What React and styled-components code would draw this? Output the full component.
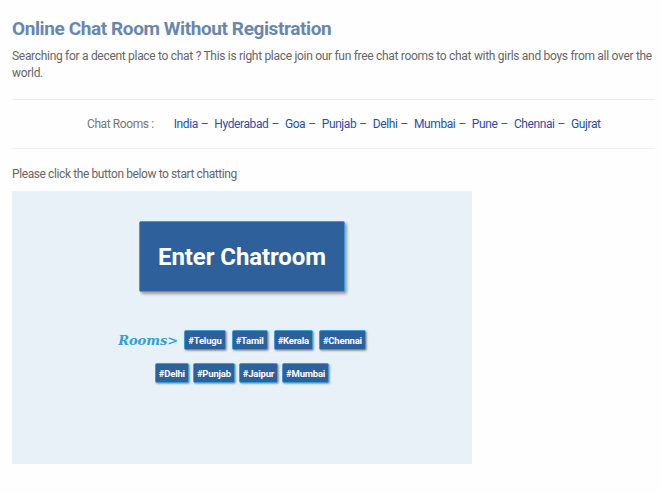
import React from "react";
import styled, { createGlobalStyle } from "styled-components";

const GlobalStyle = createGlobalStyle`
  body {
    margin: 0;
    background: #fefefe;
    font-family: Roboto, "Liberation Sans", sans-serif;
  }
`;

const Page = styled.div`
  padding: 17px 6px 0 12px;
  letter-spacing: -0.4px;
`;

const Title = styled.h1`
  margin: 0;
  font-size: 19px;
  line-height: 24px;
  font-weight: 700;
  color: #6887af;
  letter-spacing: -0.4px;
`;

const Intro = styled.p`
  margin: 7px 0 0;
  font-size: 12px;
  line-height: 17px;
  color: #666;
  letter-spacing: -0.3px;
`;

const RoomBar = styled.div`
  margin-top: 17px;
  border-top: 1px solid #ececec;
  border-bottom: 1px solid #f2f2f2;
  height: 48px;
  display: flex;
  align-items: center;
  padding-left: 75px;
  font-size: 12px;
  color: #777;
`;

const BarLabel = styled.span`
  margin-right: 20px;
`;

const CityLink = styled.a`
  color: #2a4ea6;
  text-decoration: none;
`;

const Dash = styled.span`
  color: #555;
  margin: 0 6px 0 3px;
`;

const Hint = styled.p`
  margin: 17px 0 0;
  font-size: 12px;
  line-height: 17px;
  color: #666;
`;

const ChatBox = styled.div`
  margin-top: 8px;
  width: 460px;
  height: 273px;
  background: #e8f1f8;
  display: flex;
  flex-direction: column;
  align-items: center;
  padding-top: 30px;
  box-sizing: border-box;
  letter-spacing: 0;
`;

const EnterButton = styled.button`
  width: 206px;
  height: 71px;
  background: #2e609c;
  border: 1px solid #3a9fd6;
  border-radius: 2px;
  box-shadow: 2px 2px 3px rgba(0, 0, 0, 0.35);
  color: #fff;
  font-family: Roboto, "Liberation Sans", sans-serif;
  font-weight: 700;
  font-size: 24px;
  letter-spacing: -0.1px;
  cursor: pointer;
`;

const TagArea = styled.div`
  margin-top: 38px;
  display: flex;
  flex-direction: column;
  align-items: center;
  gap: 13px;
`;

const TagRow = styled.div`
  display: flex;
  align-items: center;
  gap: ${(p) => p.gap}px;
`;

const RoomsLabel = styled.span`
  font-family: "DejaVu Serif", "Liberation Serif", serif;
  font-style: italic;
  font-weight: 700;
  font-size: 13px;
  color: #2fa0d8;
  letter-spacing: 0;
`;

const Tag = styled.span`
  display: inline-flex;
  align-items: center;
  justify-content: center;
  height: 20px;
  padding: 0 3px;
  box-sizing: border-box;
  background: #2e609c;
  border: 1px solid #3a9fd6;
  border-radius: 2px;
  box-shadow: 1px 1px 2px rgba(0, 0, 0, 0.35);
  color: #fff;
  font-size: 9.5px;
  font-weight: 700;
  letter-spacing: -0.2px;
`;

const cities = ["India", "Hyderabad", "Goa", "Punjab", "Delhi", "Mumbai", "Pune", "Chennai", "Gujrat"];

export default function App() {
  return (
    <Page>
      <GlobalStyle />
      <Title>Online Chat Room Without Registration</Title>
      <Intro>
        Searching for a decent place to chat ? This is right place join our fun free chat rooms to chat with girls and boys from all over the world.
      </Intro>
      <RoomBar>
        <BarLabel>Chat Rooms :</BarLabel>
        {cities.map((c, i) => (
          <React.Fragment key={c}>
            <CityLink href="#">{c}</CityLink>
            {i < cities.length - 1 && <Dash>–</Dash>}
          </React.Fragment>
        ))}
      </RoomBar>
      <Hint>Please click the button below to start chatting</Hint>
      <ChatBox>
        <EnterButton>Enter Chatroom</EnterButton>
        <TagArea>
          <TagRow gap={6}>
            <RoomsLabel>Rooms&gt;</RoomsLabel>
            <Tag>#Telugu</Tag>
            <Tag>#Tamil</Tag>
            <Tag>#Kerala</Tag>
            <Tag>#Chennai</Tag>
          </TagRow>
          <TagRow gap={4}>
            <Tag>#Delhi</Tag>
            <Tag>#Punjab</Tag>
            <Tag>#Jaipur</Tag>
            <Tag>#Mumbai</Tag>
          </TagRow>
        </TagArea>
      </ChatBox>
    </Page>
  );
}
